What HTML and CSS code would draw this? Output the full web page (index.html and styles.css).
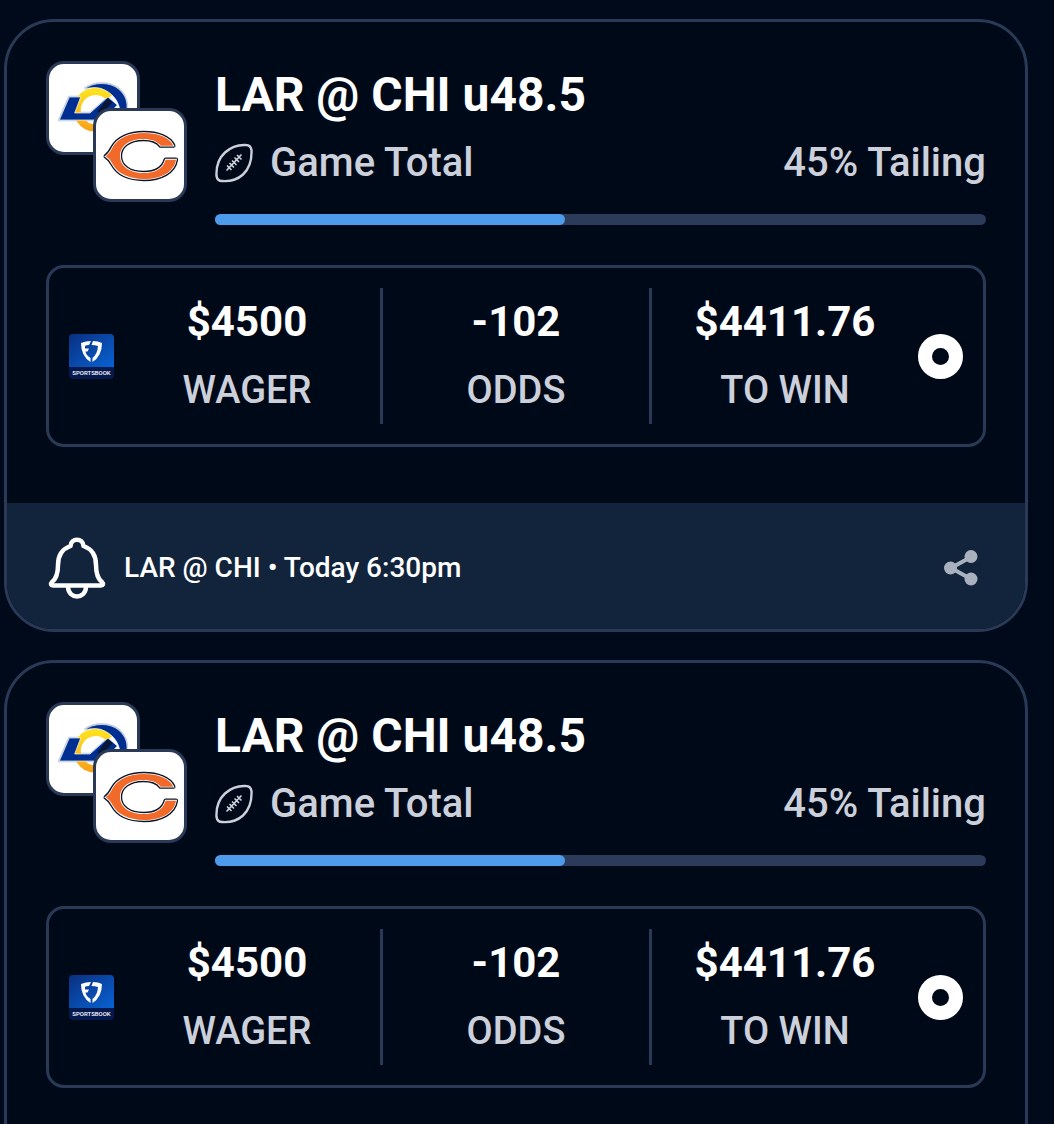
FILE: index.html
```html
<!DOCTYPE html>
<html lang="en">

<head>
    <meta charset="UTF-8">
    <meta name="viewport" content="width=device-width, initial-scale=1.0">
    <title>Bet Feed</title>
    <link rel="stylesheet" href="styles.css">
</head>

<body>
    <!-- shared icons -->
    <svg class="sprite" aria-hidden="true">
        <defs>
            <linearGradient id="gold" x1="0" y1="0" x2="0" y2="1">
                <stop offset="0" stop-color="#ffe01e" />
                <stop offset="1" stop-color="#f9a51b" />
            </linearGradient>
            <linearGradient id="book-bg" x1="0" y1="0" x2="1" y2="1">
                <stop offset="0" stop-color="#0a2f80" />
                <stop offset="1" stop-color="#0862d2" />
            </linearGradient>
            <path id="bears-c" d="M197 304C207 297 213 287 218 277C233 249 268 234 311 234C354 234 389 247 400 272L362 272C352 258 332 252 310 252C267 252 240 274 240 303C240 333 267 354 311 354C342 354 369 343 377 314L408 314C402 352 362 372 312 372C264 372 232 354 218 328C213 318 207 310 197 304Z" />
        </defs>
        <symbol id="rams" viewBox="27 27 264 264">
            <g fill="none" stroke="#b9c6dc" stroke-width="8" stroke-linejoin="round">
                <path d="M88 126H122L104 174H152L204 128L184 195H58Z" />
                <path d="M134 102C160 80 210 80 236 102C258 122 264 142 260 166" />
            </g>
            <path fill="none" stroke="url(#gold)" stroke-width="22" d="M208 128A55 55 0 1 0 166 219" />
            <path fill="#002f92" stroke="#fff" stroke-width="2" d="M134 102C160 80 210 80 236 102C258 122 264 142 260 168L240 170C238 140 218 112 182 100C166 96 150 98 134 102Z" />
            <path fill="#002f92" stroke="#fff" stroke-width="2" d="M88 126H122L104 174H150L204 126L232 150L190 195H58Z" />
            <path fill="#0a1838" d="M202 130L218 142L190 172H170Z" />
        </symbol>
        <symbol id="bears" viewBox="168 168 264 264">
            <use href="#bears-c" fill="#0b162a" stroke="#0b162a" stroke-width="13" stroke-linejoin="round" />
            <use href="#bears-c" fill="#fff" stroke="#fff" stroke-width="5" />
            <use href="#bears-c" fill="#f26a2a" />
        </symbol>
        <symbol id="football" viewBox="0 0 38 40">
            <g fill="none" stroke="currentColor" stroke-linecap="round">
                <path stroke-width="2.4" d="M31 2C34 2 36 4 36.500 7C37 18 34 26 28 31.500C22 37 14 38.500 7 38C4 38 2 36 1.500 33C1 23 4 15 10 9.500C16 4 23 1.500 31 2Z" />
                <path stroke-width="1.700" d="M12 27L26 12M12.500 23L16 26.500M15 20.500L18.500 24M17.500 18L21 21.500M20 15L23.500 18.500M22.500 12.500L26 16" />
            </g>
        </symbol>
        <symbol id="shield" viewBox="0 0 45 45">
            <rect width="45" height="45" rx="4" fill="#05194f" />
            <path fill="url(#book-bg)" d="M4 0H41Q45 0 45 4V33H0V4Q0 0 4 0Z" />
            <path fill="#fff" d="M12 9Q17 7 22 7L20 11Q17 11 16 12V14.500H20L18.500 17.500H16.500Q17 21 21.500 24V28Q12 22 12 9Z" />
            <path fill="#fff" d="M24 7Q29 7 33 9Q33 22 23.500 28V24Q28.500 20 29 12Q26 11 22.500 11Z" />
        </symbol>
        <symbol id="bell" viewBox="0 0 62 62">
            <g fill="none" stroke="currentColor" stroke-width="4.500" stroke-linecap="round" stroke-linejoin="round">
                <path d="M24.500 9C25 0.500 37 0.500 37.500 9C46 12 50 18 50 28C50 38 52 42 56 45C58 47 57 48.500 55 48.500H7C5 48.500 4 47 6 45C10 42 12 38 12 28C12 18 16 12 24.500 9Z" />
                <path d="M22 50C22.500 62.500 39.500 62.500 40 50" />
            </g>
        </symbol>
        <symbol id="share" viewBox="0 0 34 36">
            <path fill="none" stroke="currentColor" stroke-width="4" d="M27 7L7 18L27 29" />
            <g fill="currentColor">
                <circle cx="27" cy="6.500" r="6.500" />
                <circle cx="6.500" cy="18" r="6.500" />
                <circle cx="27" cy="29" r="6.500" />
            </g>
        </symbol>
    </svg>

    <main class="feed">
        <!-- bet 1 -->
        <article class="card">
            <div class="card-body">
                <header class="bet">
                    <div class="teams">
                        <svg class="team" role="img" aria-label="Rams"><use href="#rams" /></svg>
                        <svg class="team team-front" role="img" aria-label="Bears"><use href="#bears" /></svg>
                    </div>
                    <div class="info">
                        <h2 class="title">LAR @ CHI u48.5</h2>
                        <div class="meta">
                            <svg class="icon-ball" aria-hidden="true"><use href="#football" /></svg>
                            <span>Game Total</span>
                            <span class="tailing">45% Tailing</span>
                        </div>
                        <div class="bar">
                            <div class="fill" style="width: 45.4%"></div>
                        </div>
                    </div>
                </header>
                <div class="stats">
                    <svg class="book" viewBox="0 0 45 45">
                        <use href="#shield" />
                        <text class="book-name" x="22.500" y="41" text-anchor="middle">SPORTSBOOK</text>
                    </svg>
                    <dl class="cols">
                        <div class="col">
                            <dd>$4500</dd>
                            <dt>WAGER</dt>
                        </div>
                        <div class="col">
                            <dd>-102</dd>
                            <dt>ODDS</dt>
                        </div>
                        <div class="col">
                            <dd>$4411.76</dd>
                            <dt>TO WIN</dt>
                        </div>
                    </dl>
                    <input class="pick" type="radio" name="bet1" aria-label="Select bet" checked>
                </div>
            </div>
            <footer class="card-foot">
                <button class="btn btn-bell" type="button" aria-label="Notify me"><svg><use href="#bell" /></svg></button>
                <span class="game">LAR @ CHI • Today 6:30pm</span>
                <button class="btn btn-share" type="button" aria-label="Share"><svg><use href="#share" /></svg></button>
            </footer>
        </article>

        <!-- bet 2 -->
        <article class="card">
            <div class="card-body">
                <header class="bet">
                    <div class="teams">
                        <svg class="team" role="img" aria-label="Rams"><use href="#rams" /></svg>
                        <svg class="team team-front" role="img" aria-label="Bears"><use href="#bears" /></svg>
                    </div>
                    <div class="info">
                        <h2 class="title">LAR @ CHI u48.5</h2>
                        <div class="meta">
                            <svg class="icon-ball" aria-hidden="true"><use href="#football" /></svg>
                            <span>Game Total</span>
                            <span class="tailing">45% Tailing</span>
                        </div>
                        <div class="bar">
                            <div class="fill" style="width: 45.4%"></div>
                        </div>
                    </div>
                </header>
                <div class="stats">
                    <svg class="book" viewBox="0 0 45 45">
                        <use href="#shield" />
                        <text class="book-name" x="22.500" y="41" text-anchor="middle">SPORTSBOOK</text>
                    </svg>
                    <dl class="cols">
                        <div class="col">
                            <dd>$4500</dd>
                            <dt>WAGER</dt>
                        </div>
                        <div class="col">
                            <dd>-102</dd>
                            <dt>ODDS</dt>
                        </div>
                        <div class="col">
                            <dd>$4411.76</dd>
                            <dt>TO WIN</dt>
                        </div>
                    </dl>
                    <input class="pick" type="radio" name="bet2" aria-label="Select bet" checked>
                </div>
            </div>
            <footer class="card-foot">
                <button class="btn btn-bell" type="button" aria-label="Notify me"><svg><use href="#bell" /></svg></button>
                <button class="btn btn-share" type="button" aria-label="Share"><svg><use href="#share" /></svg></button>
            </footer>
        </article>
    </main>
</body>

</html>
```
FILE: styles.css
```css
* {
    margin: 0;
    padding: 0;
    box-sizing: border-box;
}

body {
    background-color: #010a1a;
    color: #fff;
    font-family: Roboto, "Liberation Sans", sans-serif;
}

.sprite {
    position: absolute;
    width: 0;
    height: 0;
}

/* scrolling list of bets */
.feed {
    height: 100vh;
    padding: 19px 26px 0 4px;
    overflow-y: auto;
    scrollbar-width: none;
}

.card {
    margin-bottom: 28px;
    border: 3px solid #2a3a56;
    border-radius: 50px;
    background-color: #000918;
    overflow: hidden;
}

.card-body {
    padding: 39px 39px 56px;
}

.bet {
    display: flex;
    gap: 28px;
    margin-bottom: 40px;
}

/* overlapping team logos */
.teams {
    position: relative;
    flex: none;
    width: 141px;
    height: 141px;
}

.team {
    display: block;
    width: 94px;
    height: 94px;
    border: 3px solid #2a3a56;
    border-radius: 18px;
    background-color: #fff;
}

.team-front {
    position: absolute;
    right: 0;
    bottom: 0;
}

.info {
    flex: 1;
}

.title {
    font-size: 48px;
    font-weight: 700;
    line-height: 68px;
}

.meta {
    display: flex;
    align-items: center;
    color: #ccd0db;
    font-size: 40px;
    font-weight: 500;
    line-height: 68px;
}

.icon-ball {
    width: 38px;
    height: 40px;
    margin-right: 17px;
}

.tailing {
    margin-left: auto;
}

.bar {
    height: 11px;
    margin-top: 17px;
    border-radius: 6px;
    background-color: #2b3b59;
}

.fill {
    height: 100%;
    border-radius: 6px;
    background-color: #4e9aeb;
}

/* wager, odds, to win */
.stats {
    display: flex;
    align-items: center;
    padding: 20px;
    border: 3px solid #2a3a56;
    border-radius: 18px;
}

.book {
    width: 45px;
    height: 45px;
}

.book-name {
    fill: #fff;
    font-size: 6px;
    font-weight: 500;
}

.cols {
    flex: 1;
    display: flex;
}

.col {
    flex: 1;
    text-align: center;
    line-height: 68px;
}

.col + .col {
    border-left: 3px solid #2a3a56;
}

.col dd {
    font-size: 42px;
    font-weight: 700;
}

.col dt {
    color: #ccd0db;
    font-size: 38px;
    font-weight: 500;
}

.pick {
    appearance: none;
    width: 45px;
    height: 45px;
    border: 14px solid #fff;
    border-radius: 50%;
}

.card-foot {
    display: flex;
    align-items: center;
    height: 126px;
    padding: 3px 39px 0;
    background-color: #12233c;
}

.btn {
    display: flex;
    justify-content: center;
    border: 0;
    background: none;
    color: #fff;
    cursor: pointer;
}

.btn-bell svg {
    width: 62px;
    height: 62px;
}

.game {
    margin-left: 16px;
    font-size: 28px;
    font-weight: 500;
}

.btn-share {
    width: 50px;
    margin-left: auto;
    color: #aab1be;
}

.btn-share svg {
    width: 34px;
    height: 36px;
}
```
